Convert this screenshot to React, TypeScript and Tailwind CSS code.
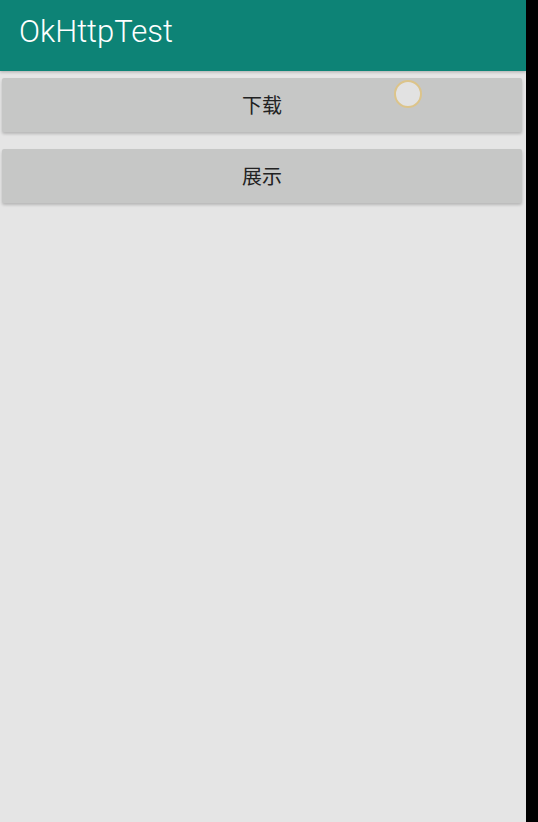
import React from "react";

export default function App() {
  return (
    <div className="flex h-[822px] w-[538px] bg-black">
      <div className="flex h-full w-[526px] flex-col bg-[#e5e5e5]">
        <div className="flex h-[71px] items-start bg-[#0d8376] pl-[19px] pt-[16px] shadow-[0_1px_3px_rgba(0,0,0,0.25)]">
          <span
            className="text-[31px] font-light leading-none text-white"
            style={{ fontFamily: "Roboto, 'Noto Sans', sans-serif" }}
          >
            OkHttpTest
          </span>
        </div>
        <div className="flex flex-col gap-[17px] px-[2px] pt-[7px]">
          <div className="relative">
            <button
              className="flex h-[54px] w-[520px] items-center justify-center rounded-[2px] bg-[#c6c7c6] text-[20px] text-[#222] shadow-[0_2px_3px_rgba(0,0,0,0.2)]"
              style={{ fontFamily: "'Noto Sans CJK SC', sans-serif" }}
            >
              下载
            </button>
            <div className="absolute left-[392px] top-[2px] h-[28px] w-[28px] rounded-full border-2 border-[#dcc48a] bg-[#e2e2e2]" />
          </div>
          <button
            className="flex h-[54px] w-[520px] items-center justify-center rounded-[2px] bg-[#c6c7c6] text-[20px] text-[#222] shadow-[0_2px_3px_rgba(0,0,0,0.2)]"
            style={{ fontFamily: "'Noto Sans CJK SC', sans-serif" }}
          >
            展示
          </button>
        </div>
      </div>
    </div>
  );
}
